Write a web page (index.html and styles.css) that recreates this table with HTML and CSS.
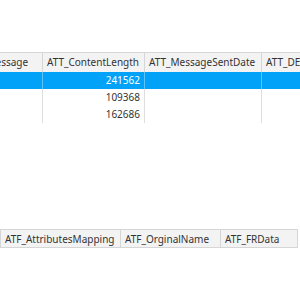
FILE: index.html
```html
<!DOCTYPE html>
<html>
<head>
<meta charset="utf-8">
<link rel="stylesheet" href="styles.css">
</head>
<body>
<div class="page">
  <div class="grid top">
    <div class="hcell">ATT_Message</div>
    <div class="hcell">ATT_ContentLength</div>
    <div class="hcell">ATT_MessageSentDate</div>
    <div class="hcell last">ATT_DEliveryDate</div>

    <div class="cell sel"></div>
    <div class="cell sel num">241562</div>
    <div class="cell sel"></div>
    <div class="cell sel"></div>

    <div class="cell"></div>
    <div class="cell num">109368</div>
    <div class="cell"></div>
    <div class="cell"></div>

    <div class="cell"></div>
    <div class="cell num">162686</div>
    <div class="cell"></div>
    <div class="cell"></div>
  </div>

  <div class="grid bottom">
    <div class="hcell">ATF_AttributesMapping</div>
    <div class="hcell">ATF_OrginalName</div>
    <div class="hcell">ATF_FRData</div>
  </div>
</div>
</body>
</html>
```
FILE: styles.css
```css
html, body {
  margin: 0;
  padding: 0;
  background: #ffffff;
}
body {
  width: 300px;
  height: 300px;
  overflow: hidden;
  font-family: "Noto Sans", "DejaVu Sans", sans-serif;
  font-size: 10px;
  color: #333333;
}
.page {
  padding-top: 52px;
}
.grid {
  display: grid;
}
.top {
  margin-left: -39px;
  grid-template-columns: 82px 102px 117px 100px;
  grid-auto-rows: 17px;
  grid-template-rows: 20px;
  width: 401px;
}
.bottom {
  margin-top: 106px;
  grid-template-columns: 120px 100px 77px;
  grid-template-rows: 19px;
  width: 297px;
  border-left: 1px solid #d6d6d6;
  box-sizing: border-box;
}
.hcell {
  background: #f3f3f3;
  border-top: 1px solid #d6d6d6;
  border-bottom: 1px solid #d6d6d6;
  border-right: 1px solid #d6d6d6;
  padding: 0 4px;
  line-height: 18px;
  white-space: nowrap;
  overflow: hidden;
  color: #333333;
}
.top .hcell {
  border-bottom: none;
  line-height: 19px;
}
.cell {
  border-right: 1px solid #dedede;
  padding: 0 4px;
  line-height: 17px;
  white-space: nowrap;
  overflow: hidden;
}
.num {
  text-align: right;
}
.sel {
  background: #03a2f9;
  color: #ffffff;
  border-right-color: #5cc4ff;
}
```
